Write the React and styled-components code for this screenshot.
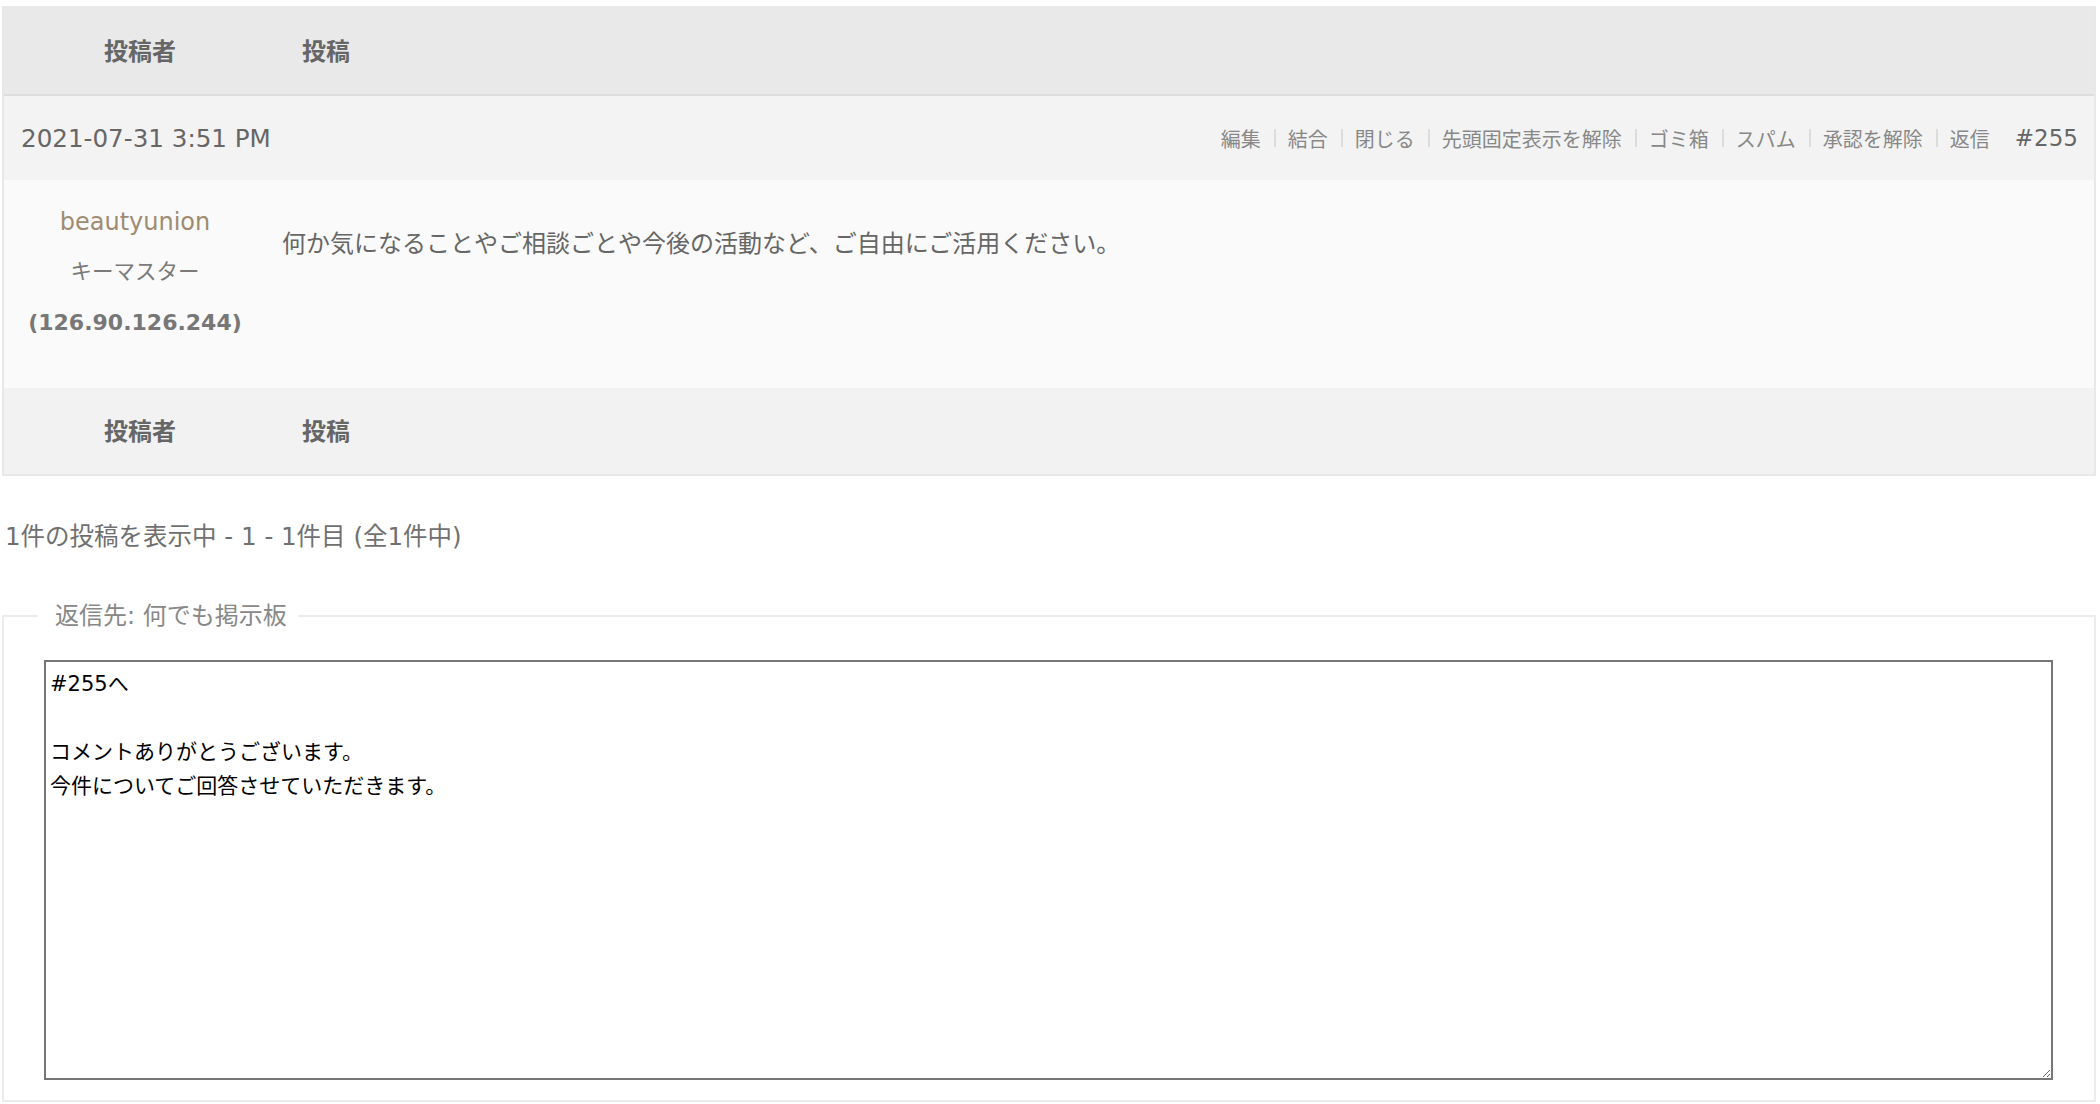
import React from 'react';
import styled, { createGlobalStyle } from 'styled-components';

const GlobalStyle = createGlobalStyle`
  body {
    margin: 0;
    background: #fff;
    font-family: "DejaVu Sans", "Noto Sans CJK JP", sans-serif;
    color: #666;
  }
`;

const Page = styled.div`
  padding: 6px 4px 0 2px;
`;

const Topic = styled.div`
  border: 2px solid #e8e8e8;
`;

const HeadRow = styled.div`
  display: flex;
  align-items: center;
  box-sizing: border-box;
  height: ${p => (p.top ? '88px' : '86px')};
  padding-bottom: 4px;
  background: ${p => (p.top ? '#e9e9e9' : '#f2f2f2')};
  border-bottom: ${p => (p.top ? '2px solid #dedede' : 'none')};
  font-size: 24px;
  font-weight: bold;
  color: #666;
`;

const AuthorHead = styled.div`
  width: 272px;
  text-align: center;
`;

const PostHead = styled.div`
  padding-left: 26px;
`;

const MetaRow = styled.div`
  display: flex;
  align-items: center;
  justify-content: space-between;
  height: 84px;
  padding: 0 16px 0 17px;
  background: #f3f3f3;
`;

const PostDate = styled.span`
  font-size: 24.6px;
  color: #666;
`;

const Actions = styled.div`
  display: flex;
  align-items: center;
  font-size: 20px;
  color: #888;
`;

const ActionLink = styled.a`
  color: #888;
  text-decoration: none;
`;

const Sep = styled.span`
  display: inline-block;
  width: 2px;
  height: 18px;
  background: #dcdcdc;
  margin: 0 12px 0 13px;
`;

const PostNum = styled.a`
  margin-left: 25px;
  font-size: 23px;
  color: #666;
  text-decoration: none;
`;

const Body = styled.div`
  display: flex;
  height: 208px;
  background: #fafafa;
`;

const AuthorCol = styled.div`
  width: 262px;
  padding-top: 24px;
  display: flex;
  flex-direction: column;
  align-items: center;
`;

const AuthorName = styled.a`
  font-size: 24px;
  line-height: 36px;
  color: #9e8b72;
  text-decoration: none;
`;

const AuthorRole = styled.div`
  margin-top: 14px;
  font-size: 21.5px;
  line-height: 36px;
  color: #7a7a7a;
`;

const AuthorIp = styled.div`
  margin-top: 15px;
  font-size: 22px;
  line-height: 36px;
  font-weight: bold;
  color: #777;
`;

const PostContent = styled.div`
  padding: 46px 16px 0 16px;
  font-size: 24px;
  line-height: 36px;
  color: #666;
`;

const Pagination = styled.div`
  margin: 43px 0 0 3px;
  font-size: 24.5px;
  line-height: 36px;
  color: #707070;
`;

const ReplyForm = styled.fieldset`
  margin: 46px 0 0;
  padding: 29px 41px 20px 40px;
  border: 2px solid #ececec;
  min-width: 0;
`;

const Legend = styled.legend`
  margin-left: -6px;
  padding: 0 11px 0 17px;
  font-size: 24px;
  line-height: 30px;
  color: #888;
`;

const TextArea = styled.textarea`
  display: block;
  box-sizing: border-box;
  width: 100%;
  height: 420px;
  margin: 0;
  padding: 5px 4px;
  border: 2px solid #767676;
  background: #fff;
  color: #000;
  font-family: "DejaVu Sans", "Noto Sans CJK JP", sans-serif;
  font-size: 21px;
  line-height: 34px;
  outline: none;
`;

const actions = ['編集', '結合', '閉じる', '先頭固定表示を解除', 'ゴミ箱', 'スパム', '承認を解除', '返信'];

const replyText = '#255へ\n\nコメントありがとうございます。\n今件についてご回答させていただきます。';

function App() {
  return (
    <Page>
      <GlobalStyle />
      <Topic>
        <HeadRow top>
          <AuthorHead>投稿者</AuthorHead>
          <PostHead>投稿</PostHead>
        </HeadRow>

        <MetaRow>
          <PostDate>2021-07-31 3:51 PM</PostDate>
          <Actions>
            {actions.map((a, i) => (
              <React.Fragment key={a}>
                {i > 0 && <Sep />}
                <ActionLink href="#">{a}</ActionLink>
              </React.Fragment>
            ))}
            <PostNum href="#">#255</PostNum>
          </Actions>
        </MetaRow>

        <Body>
          <AuthorCol>
            <AuthorName href="#">beautyunion</AuthorName>
            <AuthorRole>キーマスター</AuthorRole>
            <AuthorIp>(126.90.126.244)</AuthorIp>
          </AuthorCol>
          <PostContent>
            何か気になることやご相談ごとや今後の活動など、ご自由にご活用ください。
          </PostContent>
        </Body>

        <HeadRow>
          <AuthorHead>投稿者</AuthorHead>
          <PostHead>投稿</PostHead>
        </HeadRow>
      </Topic>

      <Pagination>1件の投稿を表示中 - 1 - 1件目 (全1件中)</Pagination>

      <ReplyForm>
        <Legend>返信先: 何でも掲示板</Legend>
        <TextArea defaultValue={replyText} />
      </ReplyForm>
    </Page>
  );
}

export default App;
